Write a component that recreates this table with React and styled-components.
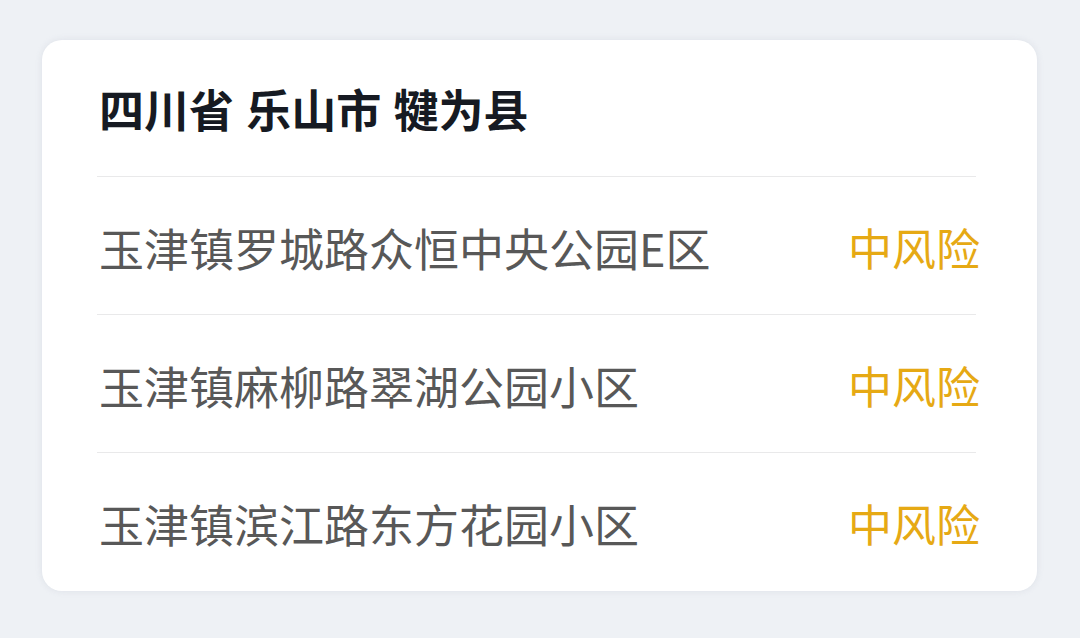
import React from "react";
import styled, { createGlobalStyle } from "styled-components";

const Global = createGlobalStyle`
  html, body { margin: 0; padding: 0; background: #eef1f5; }
  body { font-family: "Noto Sans CJK SC", "Noto Sans", sans-serif; }
`;

const Page = styled.div`
  width: 1080px;
  height: 638px;
  padding: 40px 0 0 42px;
  box-sizing: border-box;
`;

const Card = styled.div`
  width: 995px;
  height: 551px;
  background: #ffffff;
  border-radius: 20px;
  box-shadow: 0 0 6px rgba(200, 205, 215, 0.45);
  padding: 0 57px 0 55px;
  box-sizing: border-box;
  display: flex;
  flex-direction: column;
`;

const Header = styled.div`
  height: 136px;
  padding-top: 46px;
  box-sizing: border-box;
  font-size: 45px;
  line-height: 45px;
  font-weight: 700;
  color: #161a22;
  padding-left: 2px;
  word-spacing: 2px;
`;

const Row = styled.div`
  height: 138px;
  display: flex;
  align-items: center;
  justify-content: space-between;
  border-top: 1px solid #e9e9ea;
  margin-right: 4px;
  box-sizing: border-box;
`;

const Place = styled.span`
  font-size: 45px;
  line-height: 45px;
  color: #585858;
  padding-left: 2px;
  padding-top: 3px;
`;

const Risk = styled.span`
  font-size: 44px;
  line-height: 44px;
  color: #e6a914;
  margin-right: -4px;
  padding-top: 3px;
`;

const rows = [
  "玉津镇罗城路众恒中央公园E区",
  "玉津镇麻柳路翠湖公园小区",
  "玉津镇滨江路东方花园小区",
];

export default function App() {
  return (
    <>
      <Global />
      <Page>
        <Card>
          <Header>四川省 乐山市 犍为县</Header>
          {rows.map((r) => (
            <Row key={r}>
              <Place>{r}</Place>
              <Risk>中风险</Risk>
            </Row>
          ))}
        </Card>
      </Page>
    </>
  );
}
